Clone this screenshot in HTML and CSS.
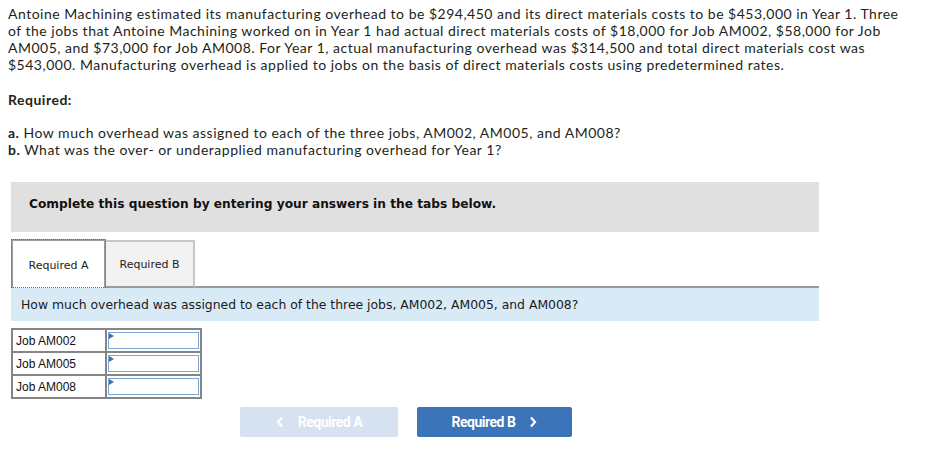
FILE: index.html
```html
<!DOCTYPE html>
<html>
<head>
<meta charset="utf-8">
<link rel="stylesheet" href="styles.css">
</head>
<body>
<div class="intro">
  <p class="para">Antoine Machining estimated its manufacturing overhead to be $294,450 and its direct materials costs to be $453,000 in Year 1. Three of the jobs that Antoine Machining worked on in Year 1 had actual direct materials costs of $18,000 for Job AM002, $58,000 for Job AM005, and $73,000 for Job AM008. For Year 1, actual manufacturing overhead was $314,500 and total direct materials cost was $543,000. Manufacturing overhead is applied to jobs on the basis of direct materials costs using predetermined rates.</p>
  <p class="req-title">Required:</p>
  <div class="req-list">
    <div><b>a.</b> How much overhead was assigned to each of the three jobs, AM002, AM005, and AM008?</div>
    <div><b>b.</b> What was the over- or underapplied manufacturing overhead for Year 1?</div>
  </div>
</div>
<div class="question">
  <div class="banner">Complete this question by entering your answers in the tabs below.</div>
  <div class="tabs">
    <div class="tab tab-active">Required A</div>
    <div class="tab tab-inactive">Required B</div>
    <div class="tab-fill"></div>
  </div>
  <div class="prompt">How much overhead was assigned to each of the three jobs, AM002, AM005, and AM008?</div>
  <table class="answers">
    <tr><td class="label">Job AM002</td><td class="cell"><div class="input"><span class="flag"></span></div></td></tr>
    <tr><td class="label">Job AM005</td><td class="cell"><div class="input"><span class="flag"></span></div></td></tr>
    <tr><td class="label">Job AM008</td><td class="cell"><div class="input"><span class="flag"></span></div></td></tr>
  </table>
  <div class="nav">
    <button class="btn btn-prev"><svg class="chev" width="8" height="12" viewBox="0 0 8 12"><path d="M6 1.5L2 6l4 4.5" fill="none" stroke="#fff" stroke-width="2.2"/></svg><span>Required A</span></button>
    <button class="btn btn-next"><span>Required B</span><svg class="chev" width="8" height="12" viewBox="0 0 8 12"><path d="M2 1.5L6 6l-4 4.5" fill="none" stroke="#fff" stroke-width="2.2"/></svg></button>
  </div>
</div>
</body>
</html>
```
FILE: styles.css
```css
html, body {
  margin: 0;
  padding: 0;
  background: #fff;
}
body {
  font-family: Lato, "Open Sans", sans-serif;
  color: #231f20;
}
.intro {
  padding: 5px 8px 0 8px;
  font-size: 14px;
  line-height: 17px;
  letter-spacing: 0.5px;
}
.para {
  margin: 0;
  width: 905px;
}
.req-title {
  margin: 18px 0 0 0;
  font-weight: bold;
}
.req-list {
  margin-top: 16px;
}
.req-list b {
  font-weight: bold;
}
.question {
  margin: 24px 0 0 11px;
  width: 808px;
}
.banner {
  background: #e0e0e0;
  height: 50px;
  box-sizing: border-box;
  display: flex;
  align-items: center;
  padding: 0 0 6px 18px;
  font-family: "DejaVu Sans", Verdana, sans-serif;
  font-weight: bold;
  font-size: 12.2px;
  color: #111;
}
.tabs {
  display: flex;
  margin-top: 7px;
  height: 49px;
  align-items: flex-end;
}
.tab {
  font-family: "DejaVu Sans", Verdana, sans-serif;
  font-size: 11px;
  color: #222;
  display: flex;
  align-items: center;
  justify-content: center;
  box-sizing: border-box;
}
.tab-active {
  width: 95px;
  height: 49px;
  background: #fff;
  border: 2px solid #9d9d9d;
  border-bottom: none;
  outline: 1px dotted #3b72bd;
  outline-offset: -1px;
  padding-top: 2px;
}
.tab-inactive {
  width: 89px;
  height: 48px;
  background: #f2f2f2;
  border: 2px solid #c6c6c6;
  border-bottom: 2px solid #9a9a9a;
  border-left: none;
}
.tab-fill {
  flex: 1;
  height: 0;
  border-bottom: 2px solid #9a9a9a;
}
.prompt {
  background: #d9eaf7;
  height: 33px;
  display: flex;
  align-items: center;
  padding-left: 10px;
  font-family: "DejaVu Sans", Verdana, sans-serif;
  font-size: 12.4px;
  color: #1a1a1a;
}
.answers {
  margin-top: 7px;
  border-collapse: collapse;
  font-family: "Liberation Sans", Arial, sans-serif;
  font-size: 12px;
  color: #111;
}
.answers td {
  border: 2px solid #858585;
  height: 19px;
  padding: 0;
}
.label {
  width: 94px;
  padding-left: 3px !important;
  box-sizing: border-box;
}
.cell {
  width: 91px;
  padding: 1px !important;
}
.input {
  position: relative;
  height: 17px;
  border: 1px solid #7da5d8;
  box-sizing: border-box;
  width: 91px;
  background: #fff;
}
.flag {
  position: absolute;
  left: 0;
  top: 0;
  width: 0;
  height: 0;
  border-top: 3px solid transparent;
  border-bottom: 3px solid transparent;
  border-left: 5px solid #3b72bd;
}
.nav {
  display: flex;
  gap: 19px;
  margin: 8px 0 0 229px;
}
.btn {
  height: 30px;
  border: none;
  border-radius: 2px;
  display: flex;
  align-items: center;
  justify-content: center;
  gap: 14px;
  font-family: Roboto, sans-serif;
  font-weight: bold;
  font-size: 14px;
  letter-spacing: -0.5px;
  color: #fff;
  padding: 0;
}
.btn-prev {
  width: 158px;
  background: #d6e2f0;
}
.btn-next {
  width: 155px;
  background: #3b74b8;
}
.chev {
  display: block;
}
```
